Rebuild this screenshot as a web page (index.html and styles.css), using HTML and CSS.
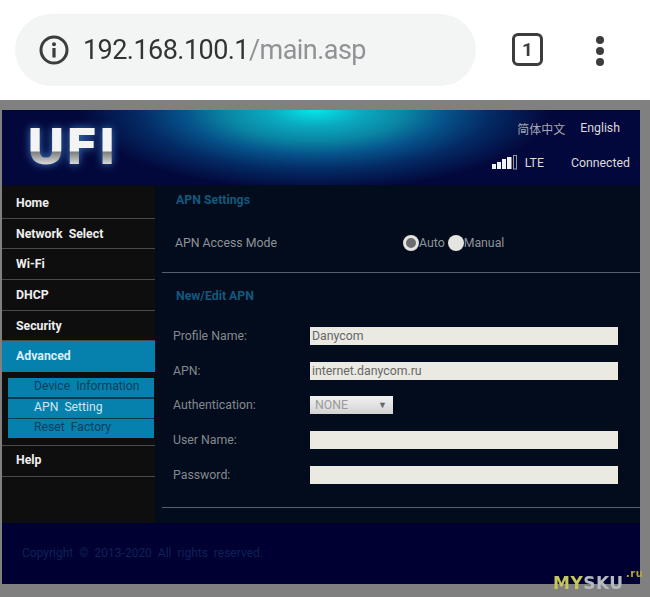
FILE: index.html
```html
<!DOCTYPE html>
<html lang="en">
<head>
    <meta charset="UTF-8">
    <meta name="viewport" content="width=device-width, initial-scale=1.0">
    <title>192.168.100.1/main.asp</title>
    <link rel="stylesheet" href="styles.css">
</head>
<body>
    <div class="toolbar">
        <div class="omnibox">
            <svg class="info-icon" width="32" height="32" viewBox="0 0 32 32">
                <circle cx="16" cy="16" r="13" fill="none" stroke="#3c3c3c" stroke-width="3"/>
                <circle cx="16" cy="10.2" r="2" fill="#3c3c3c"/>
                <rect x="14.4" y="14" width="3.2" height="9.5" fill="#3c3c3c"/>
            </svg>
            <span class="url">192.168.100.1<span class="url-path">/main.asp</span></span>
        </div>
        <div class="tab-count">1</div>
        <div class="menu-dots"><i></i><i></i><i></i></div>
    </div>

    <div class="window">
        <div class="header">
            <div class="logo">UFI</div>
            <div class="header-right">
                <div class="lang-row">
                    <span class="lang-cn">简体中文</span>
                    <span>English</span>
                </div>
                <div class="status-row">
                    <svg width="26" height="15" viewBox="0 0 26 15">
                        <rect x="0" y="9" width="4" height="5" fill="#f2f2f2"/>
                        <rect x="5" y="7" width="4" height="7" fill="#f2f2f2"/>
                        <rect x="10" y="4" width="4" height="10" fill="#f2f2f2"/>
                        <rect x="15" y="2" width="4.5" height="12" fill="#f2f2f2"/>
                        <rect x="21.5" y="0.5" width="3" height="13.5" fill="none" stroke="#9a9a9a"/>
                    </svg>
                    <span class="net-type">LTE</span>
                    <span class="net-state">Connected</span>
                </div>
            </div>
        </div>

        <div class="middle">
            <div class="sidebar">
                <div class="nav-item">Home</div>
                <div class="nav-item">Network&nbsp; Select</div>
                <div class="nav-item">Wi-Fi</div>
                <div class="nav-item">DHCP</div>
                <div class="nav-item">Security</div>
                <div class="nav-item active">Advanced</div>
                <div class="submenu">
                    <div class="sub-item">Device&nbsp; Information</div>
                    <div class="sub-item current">APN&nbsp; Setting</div>
                    <div class="sub-item">Reset&nbsp; Factory</div>
                </div>
                <div class="nav-item help">Help</div>
            </div>

            <div class="content">
                <div class="section apn-mode">
                    <h2>APN Settings</h2>
                    <div class="mode-row">
                        <span class="mode-label">APN Access Mode</span>
                        <div class="radios">
                            <span class="radio checked"></span><span>Auto</span>
                            <span class="radio"></span><span>Manual</span>
                        </div>
                    </div>
                </div>
                <div class="section apn-edit">
                    <h2>New/Edit APN</h2>
                    <div class="form-grid">
                        <label>Profile Name:</label>
                        <div class="field">Danycom</div>
                        <label>APN:</label>
                        <div class="field">internet.danycom.ru</div>
                        <label>Authentication:</label>
                        <div class="select">NONE<span class="arrow">▼</span></div>
                        <label>User Name:</label>
                        <div class="field"></div>
                        <label>Password:</label>
                        <div class="field"></div>
                    </div>
                </div>
            </div>
        </div>

        <div class="footer">Copyright &nbsp;©&nbsp; 2013-2020&nbsp; All&nbsp; rights&nbsp; reserved.</div>
    </div>

    <div class="watermark"><span class="wm-yellow">MY</span>SKU<span class="wm-ru">.ru</span></div>
</body>
</html>
```

FILE: styles.css
```css
* {
    margin: 0;
    padding: 0;
    box-sizing: border-box;
}

html, body {
    width: 650px;
    height: 597px;
    overflow: hidden;
}

body {
    position: relative;
    background: #808080;
    font-family: Roboto, "Liberation Sans", sans-serif;
    color: #bbb;
}

/* browser chrome */
.toolbar {
    height: 100px;
    background: #fff;
    padding-top: 14px;
    padding-left: 15px;
    display: flex;
    align-items: flex-start;
    filter: blur(0.4px);
}

.omnibox {
    width: 461px;
    height: 72px;
    background: #f3f4f4;
    border-radius: 36px;
    display: flex;
    align-items: center;
    padding-left: 23px;
}

.url {
    margin-left: 13px;
    font-size: 27px;
    letter-spacing: -0.55px;
    color: #333;
}

.url-path {
    color: #8f9395;
}

.tab-count {
    width: 31px;
    height: 33px;
    margin-left: 36px;
    margin-top: 19px;
    border: 3px solid #3c3c3c;
    border-radius: 6px;
    color: #3c3c3c;
    font-size: 19px;
    font-weight: 700;
    display: flex;
    align-items: center;
    justify-content: center;
}

.menu-dots {
    margin-left: 53px;
    margin-top: 22px;
    display: flex;
    flex-direction: column;
    gap: 3px;
}

.menu-dots i {
    width: 8px;
    height: 8px;
    border-radius: 50%;
    background: #3c3c3c;
}

/* router page */
.window {
    width: 638px;
    height: 474px;
    margin: 10px 0 0 2px;
    background: #020c1c;
    display: flex;
    flex-direction: column;
    filter: blur(0.4px);
}

.header {
    height: 75px;
    display: flex;
    justify-content: space-between;
    background: radial-gradient(ellipse 235px 80px at 313px 0, #06e6ea 0%, #0aa9c0 20%, #0a86a4 38%, #06528a 56%, #042a64 75%, #03083c 100%);
    background-color: #03083c;
}

.logo {
    margin: 13px 0 0 24px;
    font-family: "DejaVu Sans", sans-serif;
    font-size: 49px;
    line-height: 50px;
    height: 50px;
    font-weight: 700;
    letter-spacing: -0.6px;
    background: linear-gradient(#f4f4f4 0%, #f4f4f4 56%, #7d7d7d 58%, #d8d8d8 82%, #e8e8e8 100%);
    -webkit-background-clip: text;
    background-clip: text;
    color: transparent;
    filter: drop-shadow(0 0 4px rgba(70, 150, 230, 0.8));
}

.header-right {
    width: 150px;
    font-size: 12.3px;
    color: #dcdcdc;
    padding-top: 10px;
}

.lang-row {
    display: flex;
    justify-content: flex-end;
    gap: 15px;
    padding-right: 20px;
    height: 17px;
    line-height: 17px;
}

.lang-cn {
    font-family: "Noto Sans CJK SC", sans-serif;
    font-size: 12px;
    color: #a8a8b0;
}

.status-row {
    display: flex;
    align-items: center;
    margin-top: 17px;
    height: 17px;
    padding-right: 10px;
    justify-content: flex-end;
}

.net-type {
    margin-left: 7px;
}

.net-state {
    margin-left: 27px;
}

.middle {
    height: 337px;
    margin-top: 1px;
    display: flex;
}

.sidebar {
    width: 153px;
    background: #0e0e0e;
    padding-top: 2px;
}

.nav-item {
    height: 30.7px;
    padding-left: 14px;
    font-size: 12.3px;
    font-weight: 700;
    line-height: 30px;
    color: #efefef;
    border-bottom: 1px solid #4a4a4a;
}

.nav-item.active {
    background: #0681ae;
    border-bottom: 0;
    line-height: 30px;
    color: #d9eef5;
}

.submenu {
    margin: 6px 1px 7px 6px;
    background: #043a52;
    display: flex;
    flex-direction: column;
    gap: 1.5px;
}

.sub-item {
    height: 19px;
    background: #0681ae;
    padding-left: 26px;
    font-size: 12.2px;
    line-height: 17px;
    color: #07405c;
}

.sub-item.current {
    color: #cfe6ee;
}

.help {
    border-top: 1px solid #4a4a4a;
    height: 32px;
    line-height: 28px;
}

.content {
    flex: 1;
    padding-left: 7px;
}

.section {
    border-bottom: 1px solid #56606a;
}

.content h2 {
    font-size: 12.3px;
    font-weight: 700;
    color: #11597e;
    line-height: 16px;
}

.apn-mode {
    height: 87px;
    padding: 6px 0 0 14px;
}

.mode-row {
    display: flex;
    align-items: center;
    margin-top: 26px;
    margin-left: -1px;
    height: 18px;
    font-size: 12.3px;
    color: #8f9398;
}

.mode-label {
    width: 228px;
}

.radios {
    display: flex;
    align-items: center;
}

.radio {
    width: 16px;
    height: 16px;
    border-radius: 50%;
    background: #e4e4e0;
    margin-left: 3px;
}

.radio.checked {
    margin-left: 0;
    background: #6c6c6c;
    border: 3px solid #e4e4e0;
}

.apn-edit {
    height: 235px;
    padding: 15px 22px 0 11px;
}

.apn-edit h2 {
    margin-left: 3px;
}

.form-grid {
    display: grid;
    grid-template-columns: 137px 308px;
    grid-auto-rows: 18px;
    row-gap: 16.7px;
    margin-top: 23px;
    font-size: 12.3px;
    align-items: center;
}

.form-grid label {
    color: #85898f;
}

.field {
    height: 18px;
    background: #eaeae3;
    color: #666;
    line-height: 18px;
    padding-left: 2px;
}

.select {
    width: 83px;
    height: 18px;
    background: linear-gradient(#f2f2f2, #d2d2d2);
    color: #9a9a9a;
    line-height: 18px;
    padding-left: 5px;
    padding-right: 6px;
    display: flex;
    justify-content: space-between;
}

.arrow {
    font-size: 9px;
    color: #666;
}

.footer {
    flex: 1;
    background: #000033;
    color: #0c2358;
    font-size: 12px;
    padding: 23px 0 0 20px;
}

.watermark {
    position: absolute;
    left: 553px;
    top: 574px;
    font-family: "DejaVu Sans", sans-serif;
    font-size: 17px;
    font-weight: 700;
    letter-spacing: 0.5px;
    line-height: 18px;
    color: #b4bac0;
}

.wm-yellow {
    color: #c6c65c;
}

.wm-ru {
    position: absolute;
    left: 73px;
    top: -9px;
    font-size: 10px;
    color: #b5a53c;
}
```
